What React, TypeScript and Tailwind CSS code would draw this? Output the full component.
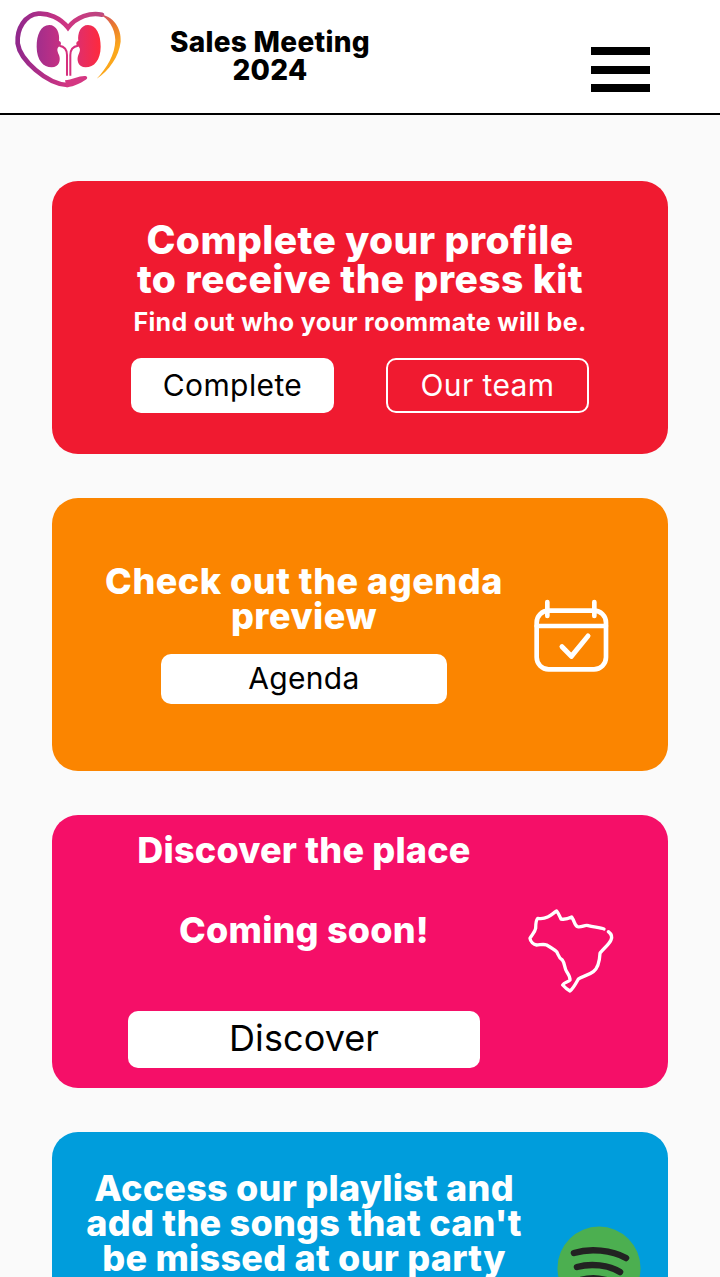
import React from 'react';

const font = { fontFamily: 'Inter, "Open Sans", sans-serif' };

function Logo() {
  return (
    <svg width="140" height="113" viewBox="0 0 140 113" fill="none">
      <defs>
        <linearGradient id="heart" x1="20" y1="0" x2="290" y2="0" gradientUnits="userSpaceOnUse">
          <stop offset="0" stopColor="#90288c" />
          <stop offset="0.55" stopColor="#cf3582" />
          <stop offset="1" stopColor="#b9487f" />
        </linearGradient>
        <linearGradient id="orange" x1="262" y1="30" x2="330" y2="120" gradientUnits="userSpaceOnUse">
          <stop offset="0" stopColor="#c9487c" />
          <stop offset="0.45" stopColor="#e8762f" />
          <stop offset="1" stopColor="#fba71c" />
        </linearGradient>
        <linearGradient id="kidney" x1="80" y1="0" x2="272" y2="0" gradientUnits="userSpaceOnUse">
          <stop offset="0" stopColor="#a12e8c" />
          <stop offset="0.5" stopColor="#d3307f" />
          <stop offset="1" stopColor="#ff2a3c" />
        </linearGradient>
      </defs>
      <g transform="translate(10 5) scale(0.3333)">
        <path
          d="M276 29C240 22 200 35 174 68C150 38 115 24 85 26C45 30 20 70 23 115C30 165 110 236 172 240"
          stroke="url(#heart)"
          strokeWidth="14"
          strokeLinecap="round"
        />
        <path d="M268 27C310 33 335 70 332 110C327 155 297 197 260 221C290 190 315 150 316 105C315 70 295 40 268 27Z" fill="url(#orange)" />
        <path d="M165 226C185 224 208 212 226 213C234 215 233 222 226 225C213 233 195 244 170 247Z" fill="#d43782" />
        <path
          d="M118 60C92 60 80 90 80 125C80 165 100 187 125 187C148 187 153 165 147 150C142 138 138 130 150 122C156 118 152 108 147 108C150 85 140 60 118 60Z"
          fill="url(#kidney)"
        />
        <path
          d="M234 60C260 60 272 90 272 125C272 165 252 187 227 187C204 187 199 165 205 150C210 138 214 130 202 122C196 118 200 108 205 108C202 85 212 60 234 60Z"
          fill="url(#kidney)"
        />
        <path d="M148 122C162 124 171 132 171 150V212M204 122C190 124 181 132 181 150V212" stroke="#d62f7e" strokeWidth="6" />
      </g>
    </svg>
  );
}

function CalendarIcon() {
  return (
    <svg width="120" height="100" viewBox="0 0 360 300" fill="none" stroke="#fff" strokeLinecap="round" strokeLinejoin="round">
      <rect x="80" y="62" width="208" height="176" rx="36" strokeWidth="14" />
      <path d="M80 108H288M112 36V78M253 36V78" strokeWidth="14" />
      <path d="M156 170L184 199L234 138" strokeWidth="15" />
    </svg>
  );
}

function BrazilIcon() {
  return (
    <svg width="92" height="92" viewBox="0 0 276 276" fill="none" stroke="#fff" strokeWidth="10" strokeLinecap="round" strokeLinejoin="round">
      <path d="M237 72C225 68 205 66 190 62C180 58 170 68 158 65C148 62 150 50 140 36C132 40 118 44 108 42C104 36 102 26 95 18C85 24 78 32 68 36C60 40 48 42 38 40C32 46 32 60 32 70C30 82 20 90 15 100C16 110 26 118 35 120C45 120 55 116 65 120C75 126 88 134 95 140C100 148 100 158 112 165C120 175 118 190 125 200C130 208 136 215 135 225C130 232 118 230 113 240C120 248 128 254 135 258C145 250 150 240 160 222C170 214 190 212 205 200C218 190 224 165 225 145C230 135 250 122 258 105C262 96 258 86 250 80" />
    </svg>
  );
}

function SpotifyIcon() {
  return (
    <svg width="84" height="84" viewBox="0 0 84 84" fill="none">
      <circle cx="42" cy="42" r="41.5" fill="#4caf50" />
      <path d="M17 27C33 22 55 24 69 32M20 41C34 37 52 39 63 46M24 54C35 51 49 52 58 58" stroke="#222" strokeWidth="6.5" strokeLinecap="round" />
    </svg>
  );
}

export default function App() {
  return (
    <div className="h-[1277px] overflow-hidden bg-[#fafafa] text-black" style={font}>
      <header className="flex h-[115px] items-start border-b-2 border-black bg-white">
        <Logo />
        <div className="mt-[28px] ml-[-10px] w-[280px] text-center text-[28px] leading-[28px] font-extrabold tracking-[0.3px]">
          Sales Meeting
          <br />
          2024
        </div>
        <div className="mt-[47px] ml-[181px] flex w-[59px] flex-col gap-[10.5px]">
          <div className="h-[8px] bg-black" />
          <div className="h-[8px] bg-black" />
          <div className="h-[8px] bg-black" />
        </div>
      </header>

      <main className="flex flex-col gap-[44px] px-[52px] pt-[66px]">
        <section className="flex h-[273px] flex-col items-center rounded-[26px] bg-[#f01a30] pt-[39px] text-white">
          <h2 className="text-center text-[39px] leading-[39px] font-extrabold tracking-[0.4px]">
            Complete your profile
            <br />
            to receive the press kit
          </h2>
          <p className="mt-[6px] text-[25px] leading-[36px] font-bold tracking-[0.35px]">Find out who your roommate will be.</p>
          <div className="mt-[18px] flex gap-[52px]">
            <button className="h-[55px] w-[203px] rounded-[10px] bg-white text-[30px] tracking-[0.4px] text-black">Complete</button>
            <button className="h-[55px] w-[203px] rounded-[10px] border-2 border-white text-[30px] tracking-[0.4px] text-white">Our team</button>
          </div>
        </section>

        <section className="flex h-[273px] items-center rounded-[26px] bg-[#fb8500] text-white">
          <div className="ml-[26px] flex w-[452px] flex-col items-center pb-[2px]">
            <h2 className="text-center text-[36px] leading-[35px] font-extrabold tracking-[0.5px]">
              Check out the agenda
              <br />
              preview
            </h2>
            <button className="mt-[20px] h-[50px] w-[286px] rounded-[10px] bg-white text-[30px] tracking-[0.3px] text-black">Agenda</button>
          </div>
          <div className="mt-[11px] ml-[-20px]">
            <CalendarIcon />
          </div>
        </section>

        <section className="flex h-[273px] items-start rounded-[26px] bg-[#f50f68] text-white">
          <div className="ml-[26px] flex w-[452px] flex-col items-center pt-[14px]">
            <h2 className="text-[36px] leading-[42px] font-extrabold tracking-[0.2px]">Discover the place</h2>
            <p className="mt-[38px] text-[36px] leading-[42px] font-extrabold tracking-[0.2px]">Coming soon!</p>
            <button className="mt-[60px] h-[57px] w-[352px] rounded-[10px] bg-white pb-[3px] text-[36px] tracking-[0.1px] text-black">Discover</button>
          </div>
          <div className="mt-[90px] ml-[-5px]">
            <BrazilIcon />
          </div>
        </section>

        <section className="flex h-[273px] items-start rounded-[26px] bg-[#009ddc] text-white">
          <div className="ml-[26px] w-[452px] pt-[39px] text-center text-[36px] leading-[35px] font-extrabold tracking-[0.25px]">
            Access our playlist and
            <br />
            add the songs that can't
            <br />
            be missed at our party
          </div>
          <div className="mt-[94px] ml-[27px]">
            <SpotifyIcon />
          </div>
        </section>
      </main>
    </div>
  );
}
